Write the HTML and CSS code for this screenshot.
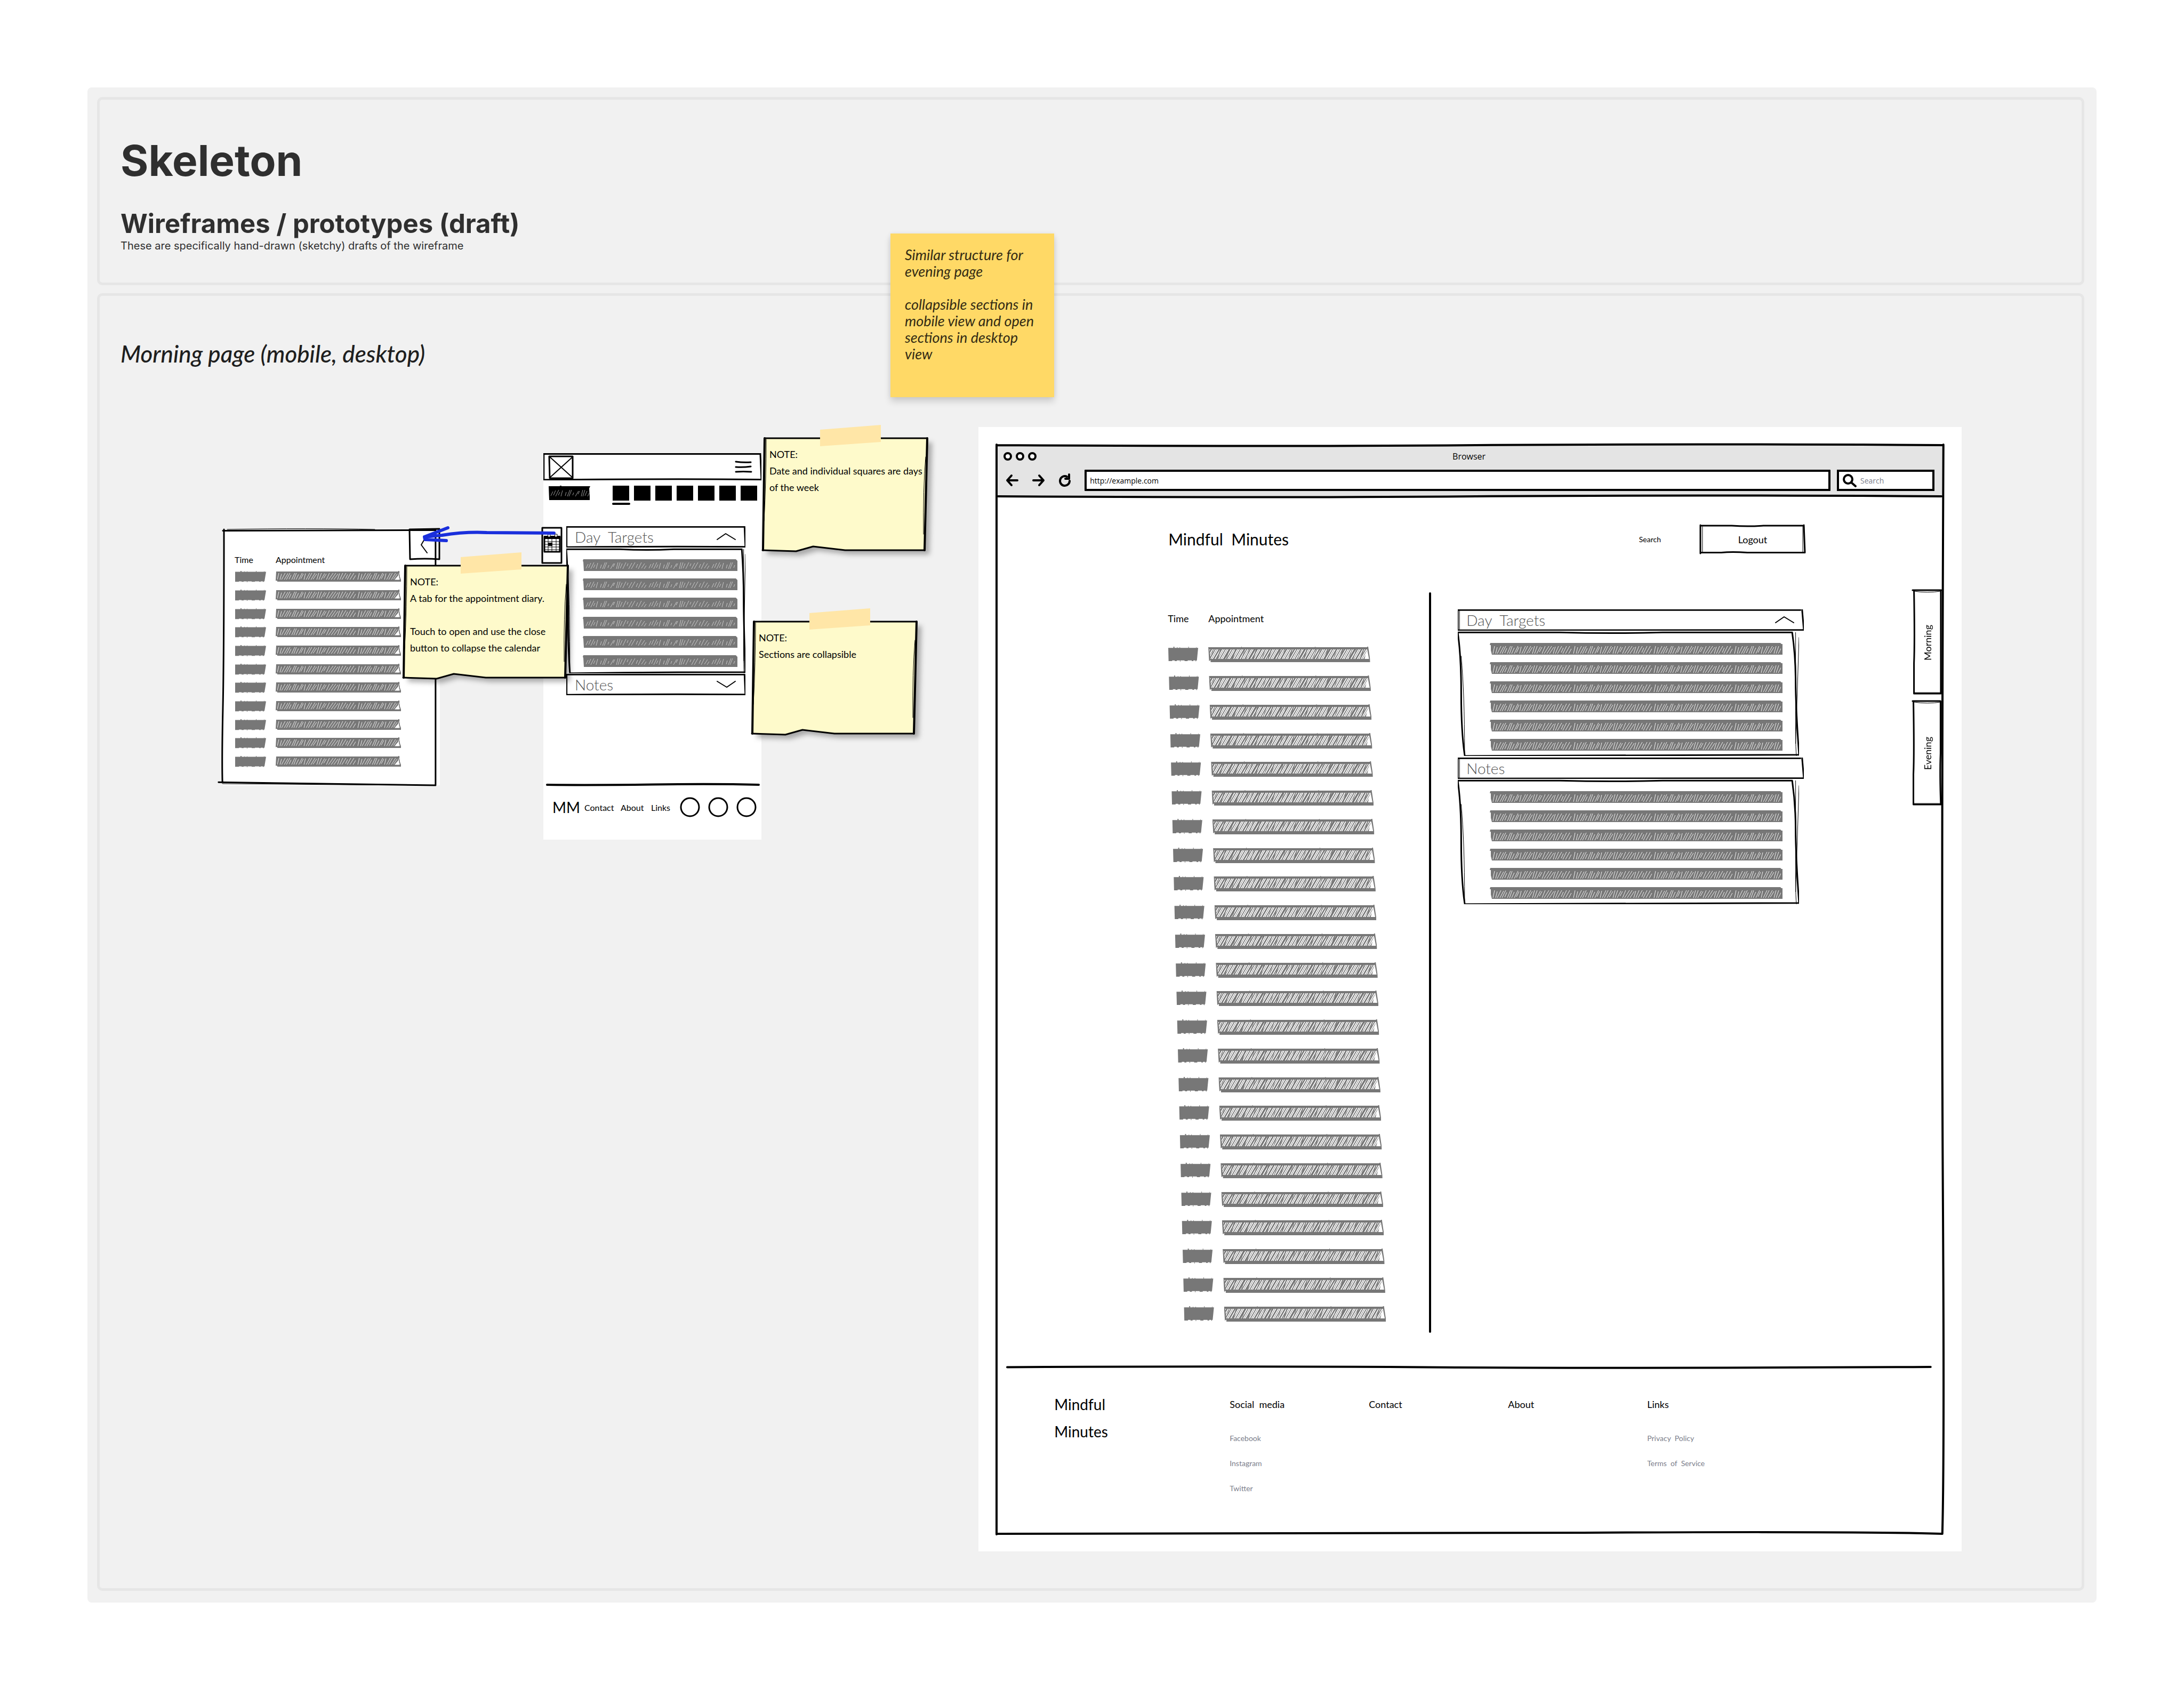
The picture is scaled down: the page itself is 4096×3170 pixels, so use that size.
FILE: index.html
```html
<!DOCTYPE html>
<html lang="en">
<head>
<meta charset="utf-8">
<title>Skeleton – wireframes</title>
<link rel="stylesheet" href="styles.css">
</head>
<body>
<svg class="defs" width="0" height="0" aria-hidden="true">
  <defs>
    <pattern id="stripe-a" width="47" height="40" patternUnits="userSpaceOnUse" patternTransform="skewX(-31)">
      <path class="grey" d="M0 0h2v40h-2zM4 0h1v40h-1zM7 0h3v40h-3zM12 0h1v40h-1zM15 0h2v40h-2zM19 0h1v40h-1zM22 0h3v40h-3zM27 0h2v40h-2zM31 0h1v40h-1zM34 0h2v40h-2zM38 0h1v40h-1zM41 0h4v40h-4z"/>
    </pattern>
    <pattern id="stripe-b" width="67" height="40" patternUnits="userSpaceOnUse" patternTransform="skewX(-20)">
      <path class="grey" d="M3 0h1v40h-1zM11 0h1v40h-1zM24 0h2v40h-2zM41 0h1v40h-1zM52 0h2v40h-2z"/>
    </pattern>
    <pattern id="scratch" width="118" height="16" patternUnits="userSpaceOnUse">
      <path class="scratch" d="M3 13l4-8M8 12l4-9M12 14l6-12M17 12l3-6M22 14l3-11M30 13l2-7M34 14l5-12M37 14l5-12M44 12l2-5M49 14l6-10M54 10l3-6M60 14l3-12M63 14l4-12M67 13l4-9M72 14l6-12M80 9l2-5M83 14l6-11M88 14l7-12M97 12l3-7M101 14l6-12M107 13l6-9M112 14l4-6"/>
    </pattern>
    <pattern id="dense" width="151" height="18" patternUnits="userSpaceOnUse">
      <path class="scratch scratch-bold" d="M2 16l3-14M7 16l3-12M10 16l7-14M15 16l7-13M19 16l7-14M24 15l4-9M29 16l6-14M33 16l5-14M37 16l5-11M42 16l7-14M46 14l5-10M52 16l3-13M56 16l7-14M60 16l7-14M65 16l8-14M69 15l7-11M76 16l4-14M80 16l5-14M84 16l7-13M89 13l5-9M94 16l6-14M98 16l9-14M103 16l9-14M108 16l8-12M115 16l4-13M119 16l6-14M123 16l8-14M130 14l4-9M133 16l7-14M138 16l8-14M144 16l5-9"/>
    </pattern>
    <symbol id="time-bar" viewBox="0 0 60 26" preserveAspectRatio="none">
      <path class="grey" d="M1 2H11V0h2v2h5V1h1v1h4V1h1v1h16V0h1v2h14l1-2v2h3L56 24h-1l-1 2-1-2H49v1H46v-1H38v1H32v-1H24v2h-1v-2H17v1H13v-1H8v1H1z"/>
    </symbol>
    <symbol id="text-bar" viewBox="0 0 303 30" preserveAspectRatio="none">
      <path fill="url(#stripe-a)" d="M2 4H298L292 25H4z"/>
      <path fill="url(#stripe-b)" d="M2 4H298L292 25H4z"/>
      <path class="grey" d="M0 1H62V0h1v1h137V0h1v1h97V0h2l3 24v5H4V25l-3 2zM2 5l2 18H301L298 5z" fill-rule="evenodd"/>
      <path class="grey" d="M4 23H302V29H4z"/>
    </symbol>
    <symbol id="small-bar" viewBox="0 0 235 23" preserveAspectRatio="none">
      <path class="grey" d="M1 1H230V0h2l1 12 2 6v4H3V20H0z"/>
      <path fill="url(#dense)" transform="translate(1 2)" d="M2 2H232V16H2z"/>
      <path class="paper" d="M231 8l1 10h-9z"/>
    </symbol>
    <symbol id="target-bar" viewBox="0 0 290 22" preserveAspectRatio="none">
      <path class="grey" d="M1 0H287l3 3V22H2L1 5 0 3z"/>
      <path fill="url(#scratch)" transform="translate(3 4)" d="M0 0H284V15H0z"/>
    </symbol>
    <symbol id="wide-bar" viewBox="0 0 550 22" preserveAspectRatio="none">
      <path class="grey" d="M1 0H545l2 2h2V22H4L2 14V4H0z"/>
      <path fill="url(#dense)" transform="translate(4 4)" d="M0 0H542V17H0z"/>
    </symbol>
    <symbol id="frame-head" viewBox="0 0 100 100" preserveAspectRatio="none">
      <path class="pen" d="M0 3H99M0 2V98M99.5 1L100 98M0 98Q60 94 100 97"/>
      <path class="pen pen-thin" d="M0.5 4V95"/>
    </symbol>
    <symbol id="frame-body" viewBox="0 0 100 100" preserveAspectRatio="none">
      <path class="pen" d="M0 1H30Q45 2 60 1H98M98 1Q99 20 99 40T100 99M0 1Q1 20 1 50T2 99M2 100Q50 99 100 99"/>
      <path class="pen pen-thin" d="M1 20Q2 50 2 97M99 1Q99 50 99 80T100 100M100 5L99 90"/>
    </symbol>
    <symbol id="chevron-up" viewBox="0 0 36 14"><path class="pen pen-mid" d="M1 12L17 1L35 12"/></symbol>
    <symbol id="chevron-down" viewBox="0 0 36 14"><path class="pen pen-mid" d="M1 1L19 12L35 1"/></symbol>
    <symbol id="note-paper" viewBox="0 0 311 240" overflow="visible">
      <path class="note-sheet" d="M5 25H310L305 235H156L96 228L64 237L1 235Z"/>
      <path class="pen" d="M5 25H310M305 235H156L96 228L64 237L1 235"/>
      <path class="pen pen-side" d="M5 25L2 235M310 25L305 235"/>
      <path class="pen pen-thin" d="M8 27Q8 100 4 180M307 60Q302 120 303 205"/>
      <path class="note-tape" d="M109 9L223 0V32L109 40Z"/>
    </symbol>
  </defs>
</svg>

<main class="page">
  <div class="frame">
    <header class="panel intro">
      <h1 class="intro-title">Skeleton</h1>
      <h2 class="intro-subtitle">Wireframes / prototypes (draft)</h2>
      <p class="intro-text">These are specifically hand-drawn (sketchy) drafts of the wireframe</p>
    </header>

    <section class="panel work">
      <h2 class="work-title">Morning page (mobile, desktop)</h2>
      <div class="board">

        <section class="drawer hand">
          <svg class="outline" viewBox="0 0 100 100" preserveAspectRatio="none" aria-hidden="true">
            <path class="pen" d="M0 0.5Q50 0.5 98 0.3M0.5 0Q0.5 50 0 70T-0.2 99M98 0V100M-2 98.8L98 100"/>
            <path class="pen pen-thin" d="M2 0Q40 -0.6 70 0M0 99.4L75 99.9"/>
          </svg>
          <button class="drawer-close" type="button" aria-label="Close calendar">
            <svg viewBox="0 0 58 59" aria-hidden="true"><path class="pen" d="M1 2L57 1V58Q30 56 2 58L1 2"/><path class="pen pen-mid" d="M30 19L23 31L34 46"/></svg>
          </button>
          <table class="diary diary-small">
            <thead><tr><th scope="col">Time</th><th scope="col">Appointment</th></tr></thead>
            <tbody>
              <tr><td><svg><use href="#time-bar"/></svg></td><td><svg><use href="#small-bar"/></svg></td></tr>
              <tr><td><svg><use href="#time-bar"/></svg></td><td><svg><use href="#small-bar"/></svg></td></tr>
              <tr><td><svg><use href="#time-bar"/></svg></td><td><svg><use href="#small-bar"/></svg></td></tr>
              <tr><td><svg><use href="#time-bar"/></svg></td><td><svg><use href="#small-bar"/></svg></td></tr>
              <tr><td><svg><use href="#time-bar"/></svg></td><td><svg><use href="#small-bar"/></svg></td></tr>
              <tr><td><svg><use href="#time-bar"/></svg></td><td><svg><use href="#small-bar"/></svg></td></tr>
              <tr><td><svg><use href="#time-bar"/></svg></td><td><svg><use href="#small-bar"/></svg></td></tr>
              <tr><td><svg><use href="#time-bar"/></svg></td><td><svg><use href="#small-bar"/></svg></td></tr>
              <tr><td><svg><use href="#time-bar"/></svg></td><td><svg><use href="#small-bar"/></svg></td></tr>
              <tr><td><svg><use href="#time-bar"/></svg></td><td><svg><use href="#small-bar"/></svg></td></tr>
              <tr><td><svg><use href="#time-bar"/></svg></td><td><svg><use href="#small-bar"/></svg></td></tr>
            </tbody>
          </table>
        </section>

        <section class="mobile hand">
          <header class="mobile-head">
            <svg class="outline" aria-hidden="true"><use href="#frame-head"/></svg>
            <svg class="mobile-logo" viewBox="0 0 46 44" aria-hidden="true"><path class="pen" d="M1 2H45V43H2Z"/><path class="pen pen-mid" d="M2 3L45 42M45 3L2 42"/></svg>
            <button class="menu" type="button" aria-label="Menu"><svg viewBox="0 0 31 22" aria-hidden="true"><path class="pen" d="M1 1Q15 3 29 2M1 11Q15 12 29 10M1 20Q15 19 30 20"/></svg></button>
          </header>
          <div class="dates">
            <svg class="date" viewBox="0 0 78 27" aria-hidden="true"><path d="M0 1H21V0h3v1H78L76 5 77 20V27H1z"/><path fill="url(#scratch)" transform="translate(1 6)" d="M0 0H75V15H0z"/></svg>
            <ul class="days"><li class="day day-active"></li><li class="day"></li><li class="day"></li><li class="day"></li><li class="day"></li><li class="day"></li><li class="day"></li></ul>
          </div>
          <button class="calendar-tab" type="button" aria-label="Appointments">
            <svg viewBox="0 0 38 68" aria-hidden="true">
              <path class="pen" d="M1 1H37V67H1Z"/>
              <path class="pen" d="M5 18H34V46H5Z"/><path d="M4 16H35V22H4z"/>
              <path class="pen pen-thin" d="M5 27H34M5 32H34M5 37H34M5 42H34M12 22V46M19 22V46M27 22V46"/>
              <path d="M12 29H20V35H12z"/><path class="paper" d="M12 13H16V18H12zM25 13H29V18H25z"/><path class="pen pen-thin" d="M12 13H16V18H12zM25 13H29V18H25z"/>
            </svg>
          </button>
          <div class="sections">
            <button class="section-head" type="button"><svg class="outline" aria-hidden="true"><use href="#frame-head"/></svg><span>Day&nbsp; Targets</span><svg class="chevron" aria-hidden="true"><use href="#chevron-up"/></svg></button>
            <div class="section-body">
              <svg class="outline" aria-hidden="true"><use href="#frame-body"/></svg>
              <svg class="bar"><use href="#target-bar"/></svg><svg class="bar"><use href="#target-bar"/></svg><svg class="bar"><use href="#target-bar"/></svg><svg class="bar"><use href="#target-bar"/></svg><svg class="bar"><use href="#target-bar"/></svg><svg class="bar"><use href="#target-bar"/></svg>
            </div>
            <button class="section-head" type="button"><svg class="outline" aria-hidden="true"><use href="#frame-head"/></svg><span>Notes</span><svg class="chevron" aria-hidden="true"><use href="#chevron-down"/></svg></button>
          </div>
          <footer class="mobile-foot">
            <svg class="rule" viewBox="0 0 100 4" preserveAspectRatio="none" aria-hidden="true"><path class="pen pen-bold" d="M0 2Q20 3 50 1.5T100 2"/></svg>
            <nav class="mobile-nav">
              <strong class="mobile-brand">MM</strong><a href="#contact">Contact</a><a href="#about">About</a><a href="#links">Links</a>
              <span class="circles"><svg viewBox="0 0 37 37" aria-hidden="true"><ellipse class="pen" cx="18" cy="18" rx="17" ry="17"/></svg><svg viewBox="0 0 37 37" aria-hidden="true"><ellipse class="pen" cx="18" cy="18" rx="17" ry="17"/></svg><svg viewBox="0 0 37 37" aria-hidden="true"><ellipse class="pen" cx="18" cy="18" rx="17" ry="17"/></svg></span>
            </nav>
          </footer>
        </section>

        <article class="desktop">
          <div class="browser">
            <div class="toolbar">
              <div class="toolbar-top">
                <svg class="dots" viewBox="0 0 64 18" aria-hidden="true"><g class="dot"><ellipse cx="8" cy="9" rx="6" ry="6"/><ellipse cx="31" cy="9" rx="6" ry="6"/><ellipse cx="54" cy="9" rx="6" ry="6"/></g></svg>
                <span class="browser-title">Browser</span>
              </div>
              <div class="toolbar-row">
                <button class="tool" type="button" aria-label="Back"><svg viewBox="0 0 24 24" aria-hidden="true"><path class="pen pen-bold" d="M22 12H3M11 3L3 12L11 21"/></svg></button>
                <button class="tool" type="button" aria-label="Forward"><svg viewBox="0 0 24 24" aria-hidden="true"><path class="pen pen-bold" d="M2 12H21M13 3L21 12L13 21"/></svg></button>
                <button class="tool" type="button" aria-label="Reload"><svg viewBox="0 0 24 24" aria-hidden="true"><path class="pen pen-bold" d="M20 13A9 9 0 1 1 15 5M19 1V9H12"/></svg></button>
                <input class="url" type="url" value="http://example.com" aria-label="Address">
                <label class="find">
                  <svg viewBox="0 0 26 25" aria-hidden="true"><ellipse class="pen pen-bold" cx="10" cy="10" rx="8" ry="8"/><path class="pen pen-bold" d="M16 16L24 23"/></svg>
                  <input class="find-input" type="search" placeholder="Search" aria-label="Search the web">
                </label>
              </div>
            </div>
            <svg class="outline browser-outline" viewBox="0 0 1776 2044" preserveAspectRatio="none" aria-hidden="true">
              <path class="pen pen-bold" d="M1 1Q500 4 900 1T1776 1M1776 0Q1772 900 1775 1400T1774 2043M1 0Q0 1000 1 2044M3 2043Q600 2044 1100 2041T1774 2043M4 97Q500 100 900 97T1772 97"/>
            </svg>

            <header class="site-head hand">
              <h3 class="site-brand">Mindful&nbsp; Minutes</h3>
              <a class="site-search" href="#search">Search</a>
              <button class="logout" type="button"><svg class="outline" viewBox="0 0 100 100" preserveAspectRatio="none" aria-hidden="true"><path class="pen" d="M0 2H30Q45 6 60 2H99M99 0L100 97M0 0V100M0 97H20Q30 94 45 97H100"/><path class="pen pen-thin" d="M2 5V95M98 5V95"/></svg>Logout</button>
            </header>

            <div class="site-main hand">
              <table class="diary diary-large">
                <thead><tr><th scope="col">Time</th><th scope="col">Appointment</th></tr></thead>
                <tbody>
                  <tr><td><svg><use href="#time-bar"/></svg></td><td><svg><use href="#text-bar"/></svg></td></tr>
                  <tr><td><svg><use href="#time-bar"/></svg></td><td><svg><use href="#text-bar"/></svg></td></tr>
                  <tr><td><svg><use href="#time-bar"/></svg></td><td><svg><use href="#text-bar"/></svg></td></tr>
                  <tr><td><svg><use href="#time-bar"/></svg></td><td><svg><use href="#text-bar"/></svg></td></tr>
                  <tr><td><svg><use href="#time-bar"/></svg></td><td><svg><use href="#text-bar"/></svg></td></tr>
                  <tr><td><svg><use href="#time-bar"/></svg></td><td><svg><use href="#text-bar"/></svg></td></tr>
                  <tr><td><svg><use href="#time-bar"/></svg></td><td><svg><use href="#text-bar"/></svg></td></tr>
                  <tr><td><svg><use href="#time-bar"/></svg></td><td><svg><use href="#text-bar"/></svg></td></tr>
                  <tr><td><svg><use href="#time-bar"/></svg></td><td><svg><use href="#text-bar"/></svg></td></tr>
                  <tr><td><svg><use href="#time-bar"/></svg></td><td><svg><use href="#text-bar"/></svg></td></tr>
                  <tr><td><svg><use href="#time-bar"/></svg></td><td><svg><use href="#text-bar"/></svg></td></tr>
                  <tr><td><svg><use href="#time-bar"/></svg></td><td><svg><use href="#text-bar"/></svg></td></tr>
                  <tr><td><svg><use href="#time-bar"/></svg></td><td><svg><use href="#text-bar"/></svg></td></tr>
                  <tr><td><svg><use href="#time-bar"/></svg></td><td><svg><use href="#text-bar"/></svg></td></tr>
                  <tr><td><svg><use href="#time-bar"/></svg></td><td><svg><use href="#text-bar"/></svg></td></tr>
                  <tr><td><svg><use href="#time-bar"/></svg></td><td><svg><use href="#text-bar"/></svg></td></tr>
                  <tr><td><svg><use href="#time-bar"/></svg></td><td><svg><use href="#text-bar"/></svg></td></tr>
                  <tr><td><svg><use href="#time-bar"/></svg></td><td><svg><use href="#text-bar"/></svg></td></tr>
                  <tr><td><svg><use href="#time-bar"/></svg></td><td><svg><use href="#text-bar"/></svg></td></tr>
                  <tr><td><svg><use href="#time-bar"/></svg></td><td><svg><use href="#text-bar"/></svg></td></tr>
                  <tr><td><svg><use href="#time-bar"/></svg></td><td><svg><use href="#text-bar"/></svg></td></tr>
                  <tr><td><svg><use href="#time-bar"/></svg></td><td><svg><use href="#text-bar"/></svg></td></tr>
                  <tr><td><svg><use href="#time-bar"/></svg></td><td><svg><use href="#text-bar"/></svg></td></tr>
                  <tr><td><svg><use href="#time-bar"/></svg></td><td><svg><use href="#text-bar"/></svg></td></tr>
                </tbody>
              </table>
              <div class="divider"></div>
              <div class="sections sections-wide">
                <button class="section-head" type="button"><svg class="outline" aria-hidden="true"><use href="#frame-head"/></svg><span>Day&nbsp; Targets</span><svg class="chevron" aria-hidden="true"><use href="#chevron-up"/></svg></button>
                <div class="section-body">
                  <svg class="outline" aria-hidden="true"><use href="#frame-body"/></svg>
                  <svg class="bar"><use href="#wide-bar"/></svg><svg class="bar"><use href="#wide-bar"/></svg><svg class="bar"><use href="#wide-bar"/></svg><svg class="bar"><use href="#wide-bar"/></svg><svg class="bar"><use href="#wide-bar"/></svg><svg class="bar"><use href="#wide-bar"/></svg>
                </div>
                <button class="section-head" type="button"><svg class="outline" aria-hidden="true"><use href="#frame-head"/></svg><span>Notes</span></button>
                <div class="section-body">
                  <svg class="outline" aria-hidden="true"><use href="#frame-body"/></svg>
                  <svg class="bar"><use href="#wide-bar"/></svg><svg class="bar"><use href="#wide-bar"/></svg><svg class="bar"><use href="#wide-bar"/></svg><svg class="bar"><use href="#wide-bar"/></svg><svg class="bar"><use href="#wide-bar"/></svg><svg class="bar"><use href="#wide-bar"/></svg>
                </div>
              </div>
              <nav class="tabs">
                <a class="tab" href="#morning"><svg class="outline" viewBox="0 0 100 100" preserveAspectRatio="none" aria-hidden="true"><path class="pen" d="M-2 0H100M3 0Q6 50 3 70V99H98V0"/><path class="pen pen-thin" d="M3 1Q50 3 98 1M3 98H98"/></svg><span>Morning</span></a>
                <a class="tab" href="#evening"><svg class="outline" viewBox="0 0 100 100" preserveAspectRatio="none" aria-hidden="true"><path class="pen" d="M-2 0H97M1 0Q4 50 1 70V99H98Q94 70 97 50V0"/><path class="pen pen-thin" d="M3 1Q50 3 98 1M3 98H98"/></svg><span>Evening</span></a>
              </nav>
            </div>

            <footer class="site-foot hand">
              <svg class="rule" viewBox="0 0 100 4" preserveAspectRatio="none" aria-hidden="true"><path class="pen pen-bold" d="M0 2.5Q25 0 45 2.5T100 2"/></svg>
              <div class="foot-grid">
                <strong class="foot-brand">Mindful<br>Minutes</strong>
                <div class="foot-col"><h4>Social&nbsp; media</h4><a href="#facebook">Facebook</a><a href="#instagram">Instagram</a><a href="#twitter">Twitter</a></div>
                <div class="foot-col"><h4>Contact</h4></div>
                <div class="foot-col"><h4>About</h4></div>
                <div class="foot-col"><h4>Links</h4><a href="#privacy">Privacy&nbsp; Policy</a><a href="#terms">Terms&nbsp; of&nbsp; Service</a></div>
              </div>
            </footer>
          </div>
        </article>

        <article class="note note-days hand"><svg class="note-svg" aria-hidden="true"><use href="#note-paper"/></svg><p>NOTE:<br>Date and individual squares are days<br>of the week</p></article>
        <article class="note note-collapse hand"><svg class="note-svg" aria-hidden="true"><use href="#note-paper"/></svg><p>NOTE:<br>Sections are collapsible</p></article>
        <article class="note note-diary hand"><svg class="note-svg" aria-hidden="true"><use href="#note-paper"/></svg><p>NOTE:<br>A tab for the appointment diary.<br><br>Touch to open and use the close<br>button to collapse the calendar</p></article>

        <svg class="arrow" viewBox="0 0 256 36" aria-hidden="true"><path d="M246 15L120 14Q80 12 36 19L3 22M47 5L3 22L4 27L44 29"/></svg>

        <aside class="sticky">
          <p>Similar structure for<br>evening page</p>
          <p>collapsible sections in<br>mobile view and open<br>sections in desktop<br>view</p>
        </aside>
      </div>
    </section>
  </div>
</main>
</body>
</html>
```
FILE: styles.css
```css
* { box-sizing: border-box; }

body {
  margin: 0;
  background: #fff;
  color: #000;
  font-family: Inter, "Liberation Sans", sans-serif;
}

h1, h2, h3, h4, p, ul { margin: 0; padding: 0; }
a { color: inherit; text-decoration: none; }
button { padding: 0; border: 0; background: none; color: inherit; font: inherit; }
svg { display: block; overflow: visible; }
.defs { position: absolute; }

.hand { font-family: Lato, "Liberation Sans", sans-serif; }

/* pen strokes */
.pen { fill: none; stroke: #000; stroke-width: 3px; stroke-linecap: round; stroke-linejoin: round; vector-effect: non-scaling-stroke; }
.pen-thin { stroke-width: 1px; }
.pen-mid { stroke-width: 2px; }
.pen-side { stroke-width: 4px; }
.pen-bold { stroke-width: 4px; }
.grey { fill: #777; }
.paper { fill: #fff; }
.scratch { fill: none; stroke: #fff; stroke-width: 1px; opacity: .6; }
.scratch-bold { opacity: .9; }
.outline { position: absolute; inset: 0; width: 100%; height: 100%; pointer-events: none; }

/* page frame */
.page { min-height: 100vh; padding: 164px; display: flex; }
.frame { flex: 1; display: flex; flex-direction: column; gap: 15px; padding: 18px 23px 22px 18px; background: #f1f1f1; border-radius: 8px; }
.panel { border: 5px solid #e6e6e6; border-radius: 10px; }
.intro { padding: 64px 39px 58px; color: #2f2f2f; }
.intro-title { font-size: 80px; line-height: 100px; font-weight: 700; }
.intro-subtitle { margin-top: 39px; font-size: 49px; line-height: 60px; font-weight: 700; }
.intro-text { margin-top: 1px; font-size: 20px; line-height: 21px; }
.work { flex: 1; padding-bottom: 69px; }
.work-title { padding: 78px 39px 108px; font: italic 500 44px/60px Lato, sans-serif; color: #1e1e1e; }
.board { position: relative; display: flex; justify-content: flex-end; padding-right: 225px; }

/* placeholder diary */
.diary { border-collapse: collapse; table-layout: fixed; }
.diary th { padding: 0; text-align: left; vertical-align: top; font-weight: 400; }
.diary td { padding: 0; vertical-align: top; }
.diary-small { width: 330px; margin-left: 22px; }
.diary-small th { height: 78px; padding-top: 45px; font-size: 16px; line-height: 24px; }
.diary-small th:first-child { width: 77px; }
.diary-small tr { height: 35px; }
.diary-small tr:nth-child(3n) { height: 34px; }
.diary-small svg { width: 235px; height: 21px; }
.diary-small td:first-child svg { width: 60px; }
.diary-large { width: 490px; }
.diary-large th { height: 102px; padding-top: 33px; font-size: 18px; line-height: 32px; }
.diary-large th:first-child { width: 76px; }
.diary-large tr { height: 54px; }
.diary-large tr:nth-child(4n) { height: 53px; }
.diary-large svg { width: 303px; height: 30px; }
.diary-large td:first-child svg { width: 58px; height: 28px; }
.diary-large tbody { transform: skewX(1.37deg); transform-origin: 0 0; }

/* collapsible sections */
.section-head { position: relative; display: flex; align-items: center; justify-content: space-between; width: 100%; height: 40px; padding: 0 18px 0 16px; font-size: 28px; line-height: 40px; font-weight: 300; color: #555; }
.section-body { position: relative; display: flex; flex-direction: column; gap: 14px; margin: 1px 0; padding: 21px 0 12px 31px; }
.chevron { width: 36px; height: 14px; }
.bar { width: 290px; height: 22px; }
.sections-wide .bar { width: 550px; }

/* drawer */
.drawer { position: absolute; left: 231px; top: 192px; width: 407px; height: 480px; background: #fff; }
.drawer-close { position: absolute; right: 0; top: -2px; width: 58px; height: 59px; }

/* mobile screen */
.mobile { position: absolute; left: 832px; top: 49px; width: 409px; height: 725px; display: flex; flex-direction: column; background: #fff; }
.mobile-head { position: relative; display: flex; align-items: center; justify-content: space-between; height: 51px; padding: 0 18px 0 10px; }
.mobile-logo { width: 46px; height: 44px; }
.menu { width: 31px; height: 22px; }
.dates { display: flex; justify-content: space-between; padding: 10px 8px 0 10px; }
.date { width: 78px; height: 27px; }
.days { display: flex; gap: 9px; list-style: none; }
.day { position: relative; width: 31px; height: 28px; background: #000; }
.day-active::after { content: ""; position: absolute; left: -1px; right: -2px; bottom: -8px; height: 4px; border-radius: 2px; background: #000; }
.calendar-tab { position: absolute; left: -3px; top: 139px; width: 38px; height: 68px; }
.sections { width: 336px; margin: 48px 0 0 43px; }
.mobile-foot { margin-top: auto; height: 105px; padding: 0 5px 0 7px; }
.rule { width: 100%; height: 4px; }
.mobile-nav { display: grid; grid-template-columns: 60px 68px 57px 55px 1fr; align-items: center; height: 80px; padding-left: 10px; font-size: 16px; }
.mobile-brand { font-size: 28px; font-weight: 400; }
.circles { display: flex; gap: 16px; }
.circles svg { flex: none; width: 37px; height: 37px; }

/* desktop screen */
.desktop { width: 52.8%; padding: 33px 34px 32px 33px; background: #fff; }
.browser { position: relative; }
.toolbar { height: 97px; padding: 4px 17px 0 14px; background: #e4e4e4; font-family: "Open Sans", sans-serif; }
.toolbar-top { display: grid; grid-template-columns: 1fr auto 1fr; align-items: center; height: 36px; }
.dots { width: 64px; height: 18px; }
.dot { fill: #fff; stroke: #000; stroke-width: 4px; }
.browser-title { font-size: 16px; line-height: 24px; }
.toolbar-row { display: flex; align-items: center; height: 40px; margin-top: 7px; padding-left: 4px; }
.tool { width: 24px; height: 24px; margin-right: 26px; }
.url { flex: 1; min-width: 0; height: 40px; margin: 0 12px 0 -2px; padding: 0 6px; border: 4px solid #000; border-radius: 1px; background: #fff; font: 14px "Open Sans", sans-serif; color: #000; }
.find { display: flex; align-items: center; gap: 7px; width: 183px; height: 40px; padding: 0 7px; border: 4px solid #000; background: #fff; }
.find svg { flex: none; width: 26px; height: 25px; }
.find-input { min-width: 0; width: 100%; padding: 0; border: 0; background: none; font: 14px "Open Sans", sans-serif; color: #000; }
.find-input::placeholder { color: #7b7e8b; opacity: 1; }

.site-head { display: flex; align-items: center; padding: 54px 260px 0 323px; }
.site-brand { margin-right: auto; font-size: 30px; line-height: 53px; font-weight: 400; }
.site-search { margin-right: 74px; font-size: 14px; }
.logout { position: relative; width: 196px; height: 53px; font-size: 18px; }

.site-main { display: flex; align-items: flex-start; margin-top: 73px; padding: 0 4px 0 322px; }
.divider { width: 4px; height: 1389px; border-radius: 2px; background: #000; }
.sections-wide { width: 649px; margin: 32px 0 0 50px; }
.sections-wide .section-body { margin: 1px 9px 3px 0; padding: 22px 0 10px 60px; }
.tabs { display: flex; flex-direction: column; gap: 12px; margin: -4px 0 0 auto; }
.tab { position: relative; display: flex; align-items: center; justify-content: center; width: 53px; height: 196px; font-size: 18px; }
.tab span { writing-mode: vertical-rl; transform: rotate(180deg); }

.site-foot { padding: 59px 24px 63px 21px; }
.foot-grid { display: grid; grid-template-columns: 329px 261px 261px 261px 1fr; padding: 43px 0 0 88px; }
.foot-brand { font-size: 28px; line-height: 51px; font-weight: 400; }
.foot-col { padding-top: 10px; }
.foot-col h4 { margin-bottom: 25px; font-size: 18px; line-height: 30px; font-weight: 400; }
.foot-col a { display: block; font-size: 14px; line-height: 47px; color: #7b7e8b; }

/* notes on the board */
.note { position: absolute; width: 311px; height: 240px; padding: 40px 0 0 14px; font-size: 18px; line-height: 31px; white-space: nowrap; }
.note p { position: relative; }
.note-svg { position: absolute; left: 0; top: 0; width: 311px; height: 240px; }
.note-sheet { fill: #fefacb; filter: drop-shadow(9px 8px 5px rgba(0, 0, 0, .3)); }
.note-tape { fill: #ffe6a7; }
.note-days { left: 1242px; top: -4px; }
.note-collapse { left: 1222px; top: 340px; }
.note-diary { left: 568px; top: 235px; }
.arrow { position: absolute; left: 606px; top: 184px; width: 256px; height: 36px; }
.arrow path { fill: none; stroke: #1a2fdc; stroke-width: 6px; stroke-linecap: round; stroke-linejoin: round; }
.sticky { position: absolute; left: 1483px; top: -363px; width: 307px; height: 307px; padding: 24px 27px; background: #ffd966; box-shadow: 0 8px 12px rgba(0, 0, 0, .15), 0 0 8px rgba(0, 0, 0, .06); font: italic 27px/31px Lato, sans-serif; color: #332b14; white-space: nowrap; }
.sticky p + p { margin-top: 31px; }
```
